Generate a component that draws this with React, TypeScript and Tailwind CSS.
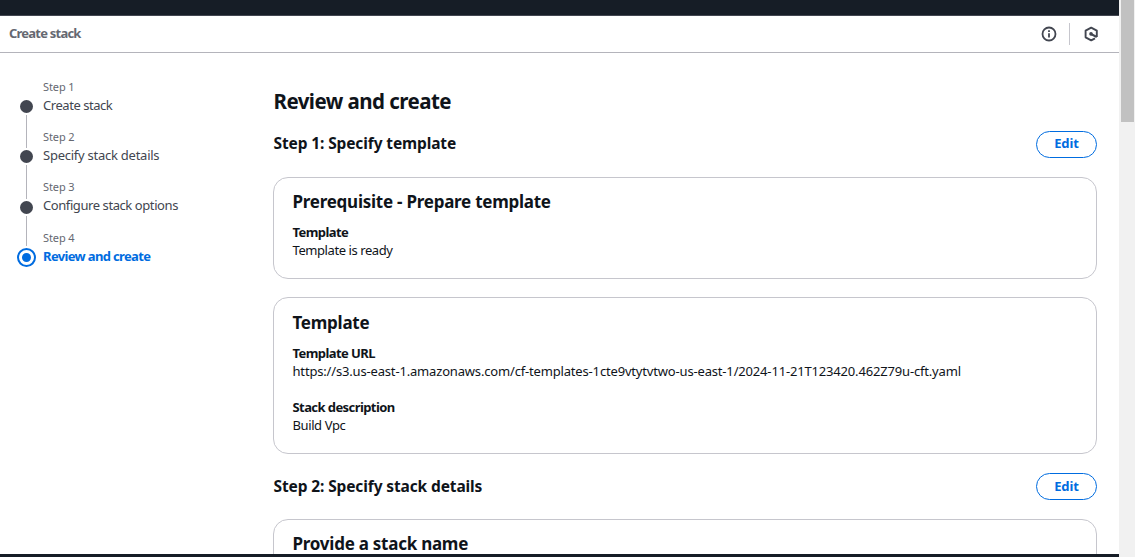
import { ReactNode } from "react";

const steps = [
  { label: "Create stack", tracking: "tracking-[-0.45px]", lead: "h-[20px] bg-transparent" },
  { label: "Specify stack details", tracking: "tracking-[-0.25px]", lead: "h-[20px] bg-[#b4b4bb]" },
  { label: "Configure stack options", tracking: "tracking-[-0.42px]", lead: "h-[21px] bg-[#b4b4bb]" },
  { label: "Review and create", tracking: "tracking-[-0.65px]", lead: "h-[17px] bg-[#b4b4bb]" },
];

function InfoIcon() {
  return (
    <svg width="16" height="16" viewBox="0 0 16 16" fill="none" stroke="#424650" strokeWidth="1.8">
      <circle cx="8" cy="8" r="6.5" />
      <path d="M8 11.6V7.2M8 6V4.2" />
    </svg>
  );
}

function HexIcon() {
  return (
    <svg width="16" height="16" viewBox="0 0 16 16" fill="none" stroke="#424650" strokeWidth="1.9" strokeLinejoin="round">
      <path d="M13.8 11V4.7L8.2 1.7 2.6 4.7v6.6l5.6 3 3.8-2" />
      <path d="M8 8l5.8 3" strokeWidth="2" />
      <circle cx="8" cy="7.9" r="1.8" fill="#424650" stroke="none" />
    </svg>
  );
}

function StepItem({ index, label, tracking, lead }: { index: number; label: string; tracking: string; lead: string }) {
  const active = index === 3;
  return (
    <li className={`flex ${index === 2 ? "h-[51px]" : "h-[50px]"}`}>
      <div className="flex w-[19px] shrink-0 flex-col items-center">
        <div className={`w-px shrink-0 ${lead}`} />
        {active ? (
          <div className="mt-[2px] flex size-[19px] shrink-0 items-center justify-center rounded-full border-2 border-[#006ce0]">
            <div className="size-[9px] rounded-full bg-[#006ce0]" />
          </div>
        ) : (
          <>
            <div className="my-[2px] size-[13px] shrink-0 rounded-full bg-[#424650]" />
            <div className="w-px grow bg-[#b4b4bb]" />
          </>
        )}
      </div>
      <div className="ml-[7px] whitespace-nowrap">
        <div className="h-[18px] text-[11px] leading-[18px] tracking-[-0.1px] text-[#656871]">Step {index + 1}</div>
        <div
          className={`text-[13px] leading-[18px] ${tracking} ${active ? "font-bold text-[#006ce0]" : "text-[#424650]"}`}
        >
          {label}
        </div>
      </div>
    </li>
  );
}

function SectionHeader({ children, textPadding }: { children: ReactNode; textPadding: string }) {
  return (
    <div className="flex h-[27px] items-center justify-between">
      <h2 className={`pl-[0.5px] text-[15.5px] leading-[20px] font-bold tracking-[-0.12px] ${textPadding}`}>{children}</h2>
      <button
        className={`h-[27px] w-[61px] rounded-full border border-[#006ce0] text-[13px] leading-[22px] font-bold tracking-[-0.1px] text-[#006ce0] ${textPadding}`}
      >
        Edit
      </button>
    </div>
  );
}

function Card({ title, className, children }: { title: ReactNode; className: string; children?: ReactNode }) {
  return (
    <section className={`rounded-[15px] border border-[#c6c6cd] px-[18.5px] ${className}`}>
      <h3 className="text-[17px] leading-[22px] font-bold tracking-[-0.25px] whitespace-nowrap">{title}</h3>
      {children}
    </section>
  );
}

function Field({ label, value, className }: { label: ReactNode; value: ReactNode; className: string }) {
  return (
    <div className={`text-[13px] leading-[18px] whitespace-nowrap ${className}`}>
      <div className="font-bold tracking-[-0.58px]">{label}</div>
      <div>{value}</div>
    </div>
  );
}

export default function App() {
  return (
    <div className="flex h-[557px] w-[1135px] overflow-hidden bg-white font-['Noto_Sans',sans-serif] text-[#0f141a]">
      <div className="flex w-[1119px] flex-col">
        <div className="h-[16px] shrink-0 border-b border-[#424650] bg-[#161d26]" />
        <header className="flex h-[37px] shrink-0 items-center border-b border-[#b4b4bb] pr-[20px] pl-[9px]">
          <span className="grow pb-[2px] text-[13px] leading-[18px] font-bold tracking-[-0.78px] text-[#656871]">
            Create stack
          </span>
          <InfoIcon />
          <div className="mr-[13px] ml-[12px] h-[22px] w-px bg-[#c6c6cd]" />
          <HexIcon />
        </header>
        <div className="flex min-h-0 grow overflow-hidden">
          <nav className="w-[273px] shrink-0 pt-[25px] pl-[17px]">
            <ol>
              {steps.map((s, i) => (
                <StepItem key={s.label} index={i} {...s} />
              ))}
            </ol>
          </nav>
          <main className="w-[824px] shrink-0 pt-[35px]">
            <h1 className="h-[43px] pl-[0.5px] text-[20.5px] leading-[26px] font-bold tracking-[-0.54px]">
              Review and create
            </h1>
            <SectionHeader textPadding="pb-[3px]">Step 1: Specify template</SectionHeader>
            <Card title="Prerequisite - Prepare template" className="mt-[19px] h-[102px] pt-[13px]">
              <Field
                className="mt-[10px]"
                label="Template"
                value={<span className="tracking-[-0.42px]">Template is ready</span>}
              />
            </Card>
            <Card title="Template" className="mt-[18px] mb-[19px] h-[157px] pt-[14px]">
              <Field
                className="mt-[10px]"
                label="Template URL"
                value={
                  <span className="tracking-[-0.17px]">
                    https://s3.us-east-1.amazonaws.com/cf-templates-1cte9vtytvtwo-us-east-1/2024-11-21T123420.462Z79u-cft.yaml
                  </span>
                }
              />
              <Field
                className="mt-[18px]"
                label="Stack description"
                value={<span className="tracking-[-0.4px]">Build Vpc</span>}
              />
            </Card>
            <SectionHeader textPadding="pb-[1px]">Step 2: Specify stack details</SectionHeader>
            <Card title="Provide a stack name" className="mt-[19px] h-[102px] pt-[13px]" />
          </main>
        </div>
        <div className="h-[3px] shrink-0 bg-[#161d26]" />
      </div>
      <div className="w-[16px] bg-[#f1f1f1] pl-[2px]">
        <div className="h-[122px] w-[13px] bg-[#c1c1c1]" />
      </div>
    </div>
  );
}
